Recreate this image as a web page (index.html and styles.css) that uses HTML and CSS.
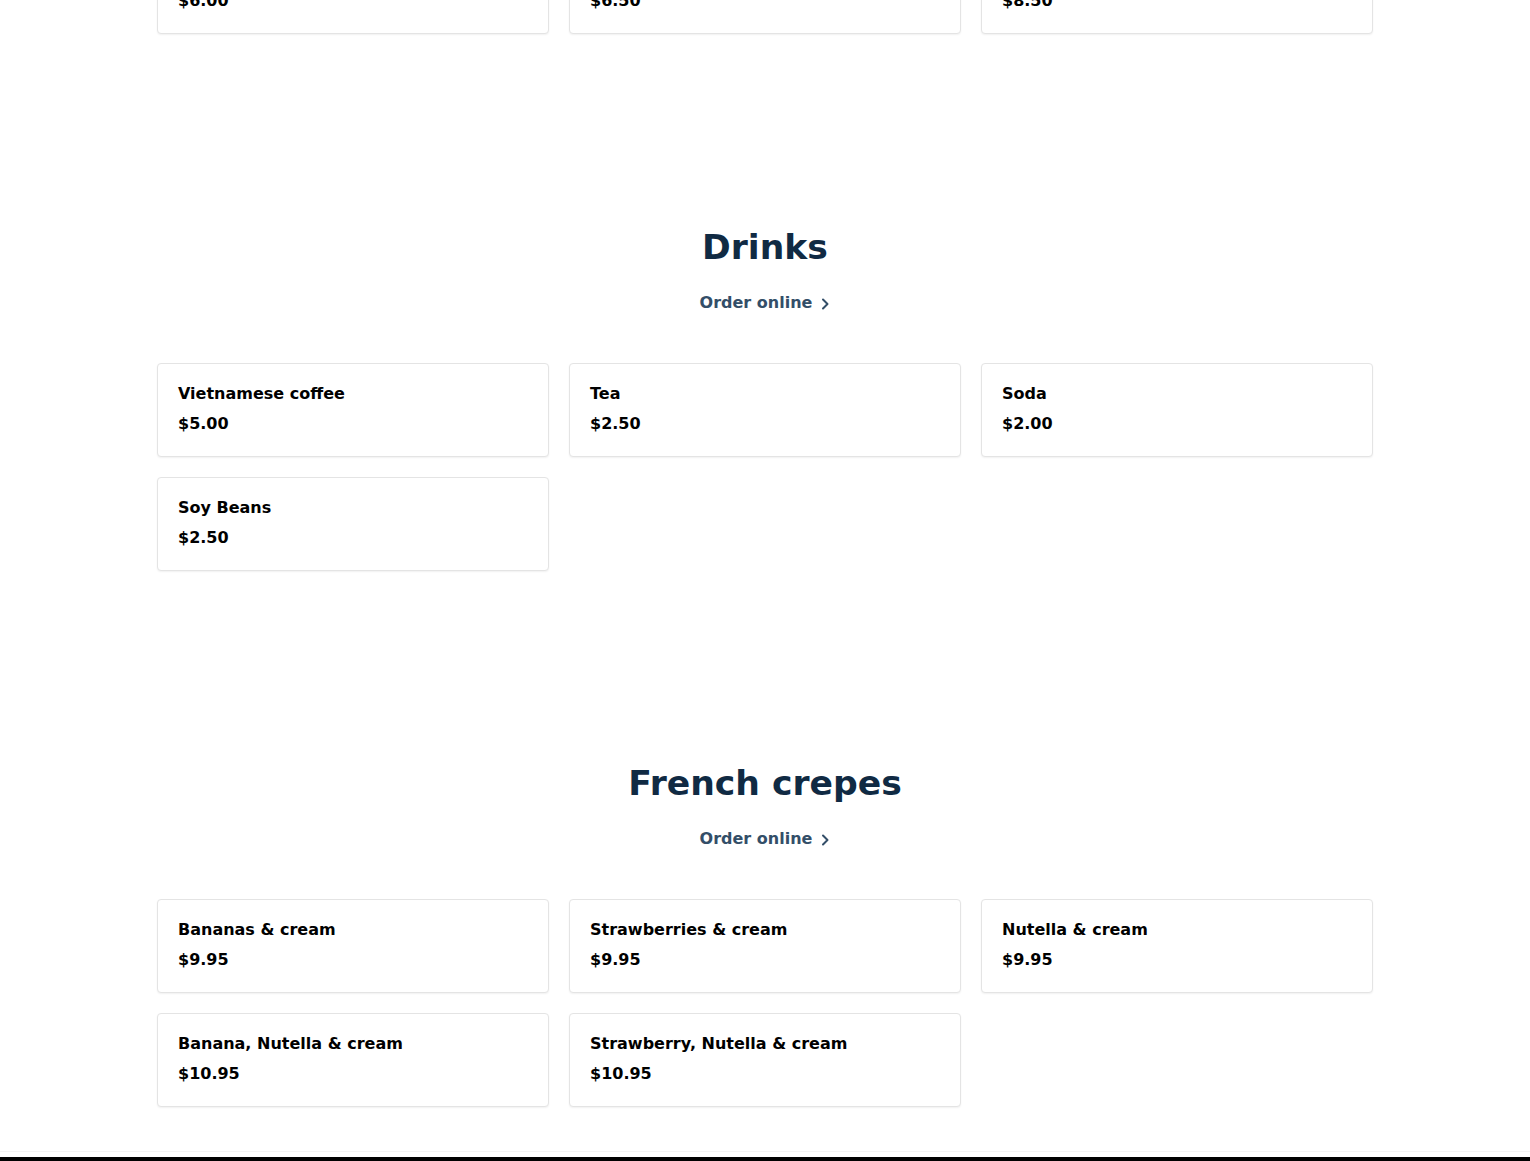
FILE: index.html
```html
<!DOCTYPE html>
<html lang="en">
<head>
<meta charset="utf-8">
<title>Menu</title>
<link rel="stylesheet" href="styles.css">
</head>
<body>
<main class="menu">
  <section class="menu-section menu-section--partial">
    <div class="card-grid card-grid--scrolled">
      <div class="card"><div class="card-name">Pho</div><div class="card-price">$6.00</div></div>
      <div class="card"><div class="card-name">Bun</div><div class="card-price">$6.50</div></div>
      <div class="card"><div class="card-name">Com</div><div class="card-price">$8.50</div></div>
    </div>
  </section>

  <section class="menu-section">
    <h2 class="section-title">Drinks</h2>
    <a class="order-link" href="#">Order online
      <svg class="chevron" width="10" height="12" viewBox="0 0 10 12" aria-hidden="true"><path d="M3 1.5 L7.5 6 L3 10.5" fill="none" stroke="currentColor" stroke-width="2" stroke-linecap="round" stroke-linejoin="round"/></svg>
    </a>
    <div class="card-grid">
      <div class="card"><div class="card-name">Vietnamese coffee</div><div class="card-price">$5.00</div></div>
      <div class="card"><div class="card-name">Tea</div><div class="card-price">$2.50</div></div>
      <div class="card"><div class="card-name">Soda</div><div class="card-price">$2.00</div></div>
      <div class="card"><div class="card-name">Soy Beans</div><div class="card-price">$2.50</div></div>
    </div>
  </section>

  <section class="menu-section menu-section--last">
    <h2 class="section-title">French crepes</h2>
    <a class="order-link" href="#">Order online
      <svg class="chevron" width="10" height="12" viewBox="0 0 10 12" aria-hidden="true"><path d="M3 1.5 L7.5 6 L3 10.5" fill="none" stroke="currentColor" stroke-width="2" stroke-linecap="round" stroke-linejoin="round"/></svg>
    </a>
    <div class="card-grid">
      <div class="card"><div class="card-name">Bananas &amp; cream</div><div class="card-price">$9.95</div></div>
      <div class="card"><div class="card-name">Strawberries &amp; cream</div><div class="card-price">$9.95</div></div>
      <div class="card"><div class="card-name">Nutella &amp; cream</div><div class="card-price">$9.95</div></div>
      <div class="card"><div class="card-name">Banana, Nutella &amp; cream</div><div class="card-price">$10.95</div></div>
      <div class="card"><div class="card-name">Strawberry, Nutella &amp; cream</div><div class="card-price">$10.95</div></div>
    </div>
  </section>
</main>
<footer class="footer"></footer>
</body>
</html>
```

FILE: styles.css
```css
* { box-sizing: border-box; }

html, body {
  margin: 0;
  padding: 0;
  background: #ffffff;
}

body {
  font-family: "DejaVu Sans", Verdana, sans-serif;
  color: #000000;
}

.menu-section {
  display: flex;
  flex-direction: column;
  align-items: center;
  padding: 142px 0 50px;
}

.menu-section--partial {
  padding-top: 0;
}

.menu-section--last {
  padding-top: 141px;
}

.section-title {
  margin: 0;
  font-size: 34.6px;
  line-height: 42px;
  font-weight: 700;
  color: #102a43;
}

.order-link {
  display: flex;
  align-items: center;
  gap: 8px;
  margin-top: 23px;
  font-size: 16px;
  line-height: 24px;
  font-weight: 700;
  color: #334e68;
  text-decoration: none;
}

.chevron {
  display: block;
  margin-top: 1px;
}

.card-grid {
  display: grid;
  grid-template-columns: repeat(3, 1fr);
  gap: 20px;
  width: 1216px;
  margin-top: 48px;
}

.card-grid--scrolled {
  margin-top: -60px;
}

.card {
  border: 1px solid #e4e4e4;
  border-radius: 4px;
  background: #ffffff;
  box-shadow: 0 1px 2px rgba(0, 0, 0, 0.06);
  padding: 18px 20px 20px;
  display: flex;
  flex-direction: column;
  gap: 6px;
}

.card-name,
.card-price {
  font-size: 16px;
  line-height: 24px;
  font-weight: 700;
}

.footer {
  height: 40px;
  background: #000000;
  box-shadow: 0 -5px 0 #ffffff, 0 -6px 0 #f3f3f3;
}
```
